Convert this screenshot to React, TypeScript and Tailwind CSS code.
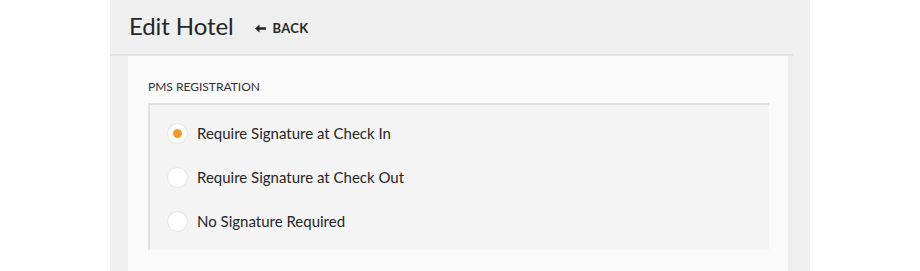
import React from "react";

const options = [
  { label: "Require Signature at Check In", checked: true },
  { label: "Require Signature at Check Out", checked: false },
  { label: "No Signature Required", checked: false },
];

export default function App() {
  return (
    <div className="w-[920px] h-[271px] bg-white overflow-hidden" style={{ fontFamily: "Lato, 'Liberation Sans', sans-serif" }}>
      <div className="ml-[110px] w-[700px] h-full bg-[#efefef] flex flex-col">
        <div className="h-[56px] mr-[17px] border-b-2 border-[#e2e2e2] flex items-center pl-[19px] pb-[3px]">
          <h1 className="text-[24px] leading-none text-[#262626] tracking-[-0.1px]">Edit Hotel</h1>
          <button className="ml-[21px] mt-[6px] flex items-center gap-[7px] text-[13px] font-bold text-[#262626] tracking-[0.3px]">
            <svg width="11" height="9" viewBox="0 0 11 9" fill="#262626">
              <path d="M0 4.5 L4.5 0.5 L4.5 3.2 L11 3.2 L11 5.8 L4.5 5.8 L4.5 8.5 Z" />
            </svg>
            BACK
          </button>
        </div>
        <div className="ml-[18px] w-[660px] flex-1 bg-[#fafafa] px-[20px] pt-[25px]">
          <div className="text-[12px] text-[#333] leading-none h-[22px]">PMS REGISTRATION</div>
          <div className="w-[621px] bg-[#f4f4f4] border-t-2 border-l-2 border-[#e0e0e0] pt-[6px] pb-[7px] pl-[18px]">
            {options.map((o) => (
              <div key={o.label} className="h-[44px] flex items-center gap-[10px]">
                <span className="w-[19px] h-[19px] rounded-full bg-white shadow-[0_0_2px_rgba(0,0,0,0.18)] flex items-center justify-center">
                  {o.checked && <span className="w-[9px] h-[9px] rounded-full bg-[#f29b26]" />}
                </span>
                <span className="text-[15px] text-[#262626]">{o.label}</span>
              </div>
            ))}
          </div>
        </div>
      </div>
    </div>
  );
}
